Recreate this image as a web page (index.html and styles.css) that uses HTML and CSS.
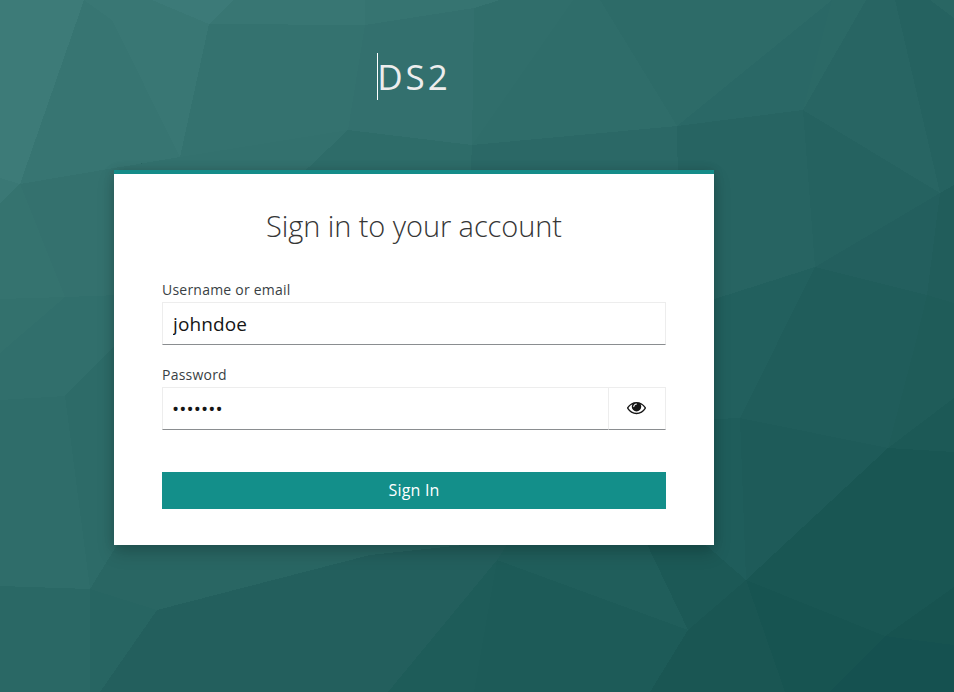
FILE: index.html
```
<!DOCTYPE html>
<html lang="en">
<head>
<meta charset="utf-8">
<title>Sign in to DS2</title>
<link rel="stylesheet" href="styles.css">
</head>
<body>
<svg class="backdrop" viewBox="0 0 954 692" preserveAspectRatio="none" aria-hidden="true">
  <rect width="954" height="692" fill="#296663"/>
  <polygon fill="#3d7b78" points="0,0 84,0 20,184 0,178"/>
  <polygon fill="#3a7875" points="0,178 20,184 0,203"/>
  <polygon fill="#377572" points="84,0 112,20 180,157 20,184"/>
  <polygon fill="#397774" points="84,0 152,0 209,24 180,157 112,20"/>
  <polygon fill="#3c7a78" points="152,0 233,0 209,24"/>
  <polygon fill="#387673" points="233,0 365,0 365,25 209,24"/>
  <polygon fill="#34726f" points="209,24 365,25 348,130 180,157"/>
  <polygon fill="#367471" points="365,0 500,0 474,8 365,25"/>
  <polygon fill="#33706e" points="365,25 474,8 472,145 348,130"/>
  <polygon fill="#306e6b" points="474,8 500,0 573,0 472,145"/>
  <polygon fill="#2f6d6a" points="573,0 600,0 677,126 472,145"/>
  <polygon fill="#2d6b68" points="600,0 832,0 677,126"/>
  <polygon fill="#2a6866" points="832,0 803,110 677,126"/>
  <polygon fill="#2b6966" points="832,0 866,0 803,110"/>
  <polygon fill="#286563" points="866,0 895,0 940,193 803,110"/>
  <polygon fill="#256260" points="895,0 954,0 954,185 940,193"/>
  <polygon fill="#296663" points="930,0 954,0 954,18"/>
  <polygon fill="#33716e" points="180,157 348,130 290,185 115,185 115,168"/>
  <polygon fill="#2e6c69" points="348,130 472,145 470,185 290,185"/>
  <polygon fill="#2b6866" points="472,145 677,126 680,185 470,185"/>
  <polygon fill="#276462" points="677,126 803,110 815,267 680,310"/>
  <polygon fill="#256260" points="803,110 940,193 815,267"/>
  <polygon fill="#235f5e" points="940,193 927,295 815,267"/>
  <polygon fill="#215d5b" points="940,193 954,185 954,303 927,295"/>
  <polygon fill="#22605e" points="680,310 815,267 740,418 690,420"/>
  <polygon fill="#205d5b" points="815,267 927,295 915,345 888,448 740,418"/>
  <polygon fill="#1f5c59" points="927,295 954,303 954,398 888,448 915,345"/>
  <polygon fill="#1c5956" points="888,448 954,398 954,452"/>
  <polygon fill="#1e5b59" points="740,418 888,448 746,580"/>
  <polygon fill="#1f5d5b" points="690,420 740,418 746,580 700,540"/>
  <polygon fill="#195653" points="888,448 954,452 954,587 885,636 746,580"/>
  <polygon fill="#175350" points="954,587 954,645 885,636"/>
  <polygon fill="#155150" points="885,636 954,645 954,692 830,692"/>
  <polygon fill="#175451" points="746,580 885,636 830,692 785,692"/>
  <polygon fill="#1a5653" points="746,580 785,692 650,692 688,630"/>
  <polygon fill="#1d5b58" points="497,560 688,630 650,692 474,692"/>
  <polygon fill="#205e5b" points="497,560 510,540 645,540 688,630"/>
  <polygon fill="#1c5956" points="645,540 700,540 746,580 688,630"/>
  <polygon fill="#235f5d" points="370,555 510,540 497,560 388,692 100,692 157,610"/>
  <polygon fill="#1e5c59" points="497,560 474,692 388,692"/>
  <polygon fill="#296663" points="157,610 370,555 370,540 120,540 90,589"/>
  <polygon fill="#276562" points="90,589 157,610 100,692 90,692"/>
  <polygon fill="#2a6865" points="0,586 90,589 90,692 0,692"/>
  <polygon fill="#2f6d6a" points="0,400 65,396 90,589 0,586"/>
  <polygon fill="#2d6b68" points="65,396 120,340 120,540 90,589"/>
  <polygon fill="#316f6c" points="0,353 65,297 120,292 120,340 65,396 0,400"/>
  <polygon fill="#35736f" points="0,203 20,184 65,297 0,299"/>
  <polygon fill="#34716e" points="20,184 120,167 120,295 65,297"/>
  <polygon fill="#33716d" points="0,299 65,297 0,353"/>
</svg>
<main class="login">
  <header class="brand"><span class="brand-name">DS2</span></header>
  <section class="card">
    <h1 class="title">Sign in to your account</h1>
    <form class="form">
      <label class="label" for="username">Username or email</label>
      <input class="input" id="username" type="text" value="johndoe">
      <label class="label" for="password">Password</label>
      <div class="group">
        <input class="input input-secret" id="password" type="password" value="secret1">
        <button class="reveal" type="button" aria-label="Show password">
          <svg class="eye" viewBox="0 384 1792 1152"><path d="M1664 960q-152-236-381-353 61 104 61 225 0 185-131.500 316.500t-316.500 131.500-316.500-131.500-131.500-316.500q0-121 61-225-229 117-381 353 133 205 333.500 326.500t434.500 121.500 434.500-121.500 333.500-326.500zm-720-384q0-20-14-34t-34-14q-125 0-214.500 89.500t-89.500 214.500q0 20 14 34t34 14 34-14 14-34q0-86 61-147t147-61q20 0 34-14t14-34zm848 384q0 34-20 69-140 230-376.500 368.500t-499.500 138.500-499.500-139-376.500-368q-20-35-20-69t20-69q140-229 376.500-368t499.500-139 499.500 139 376.500 368q20 35 20 69z"/></svg>
        </button>
      </div>
      <button class="submit" type="button">Sign In</button>
    </form>
  </section>
</main>
</body>
</html>
```
FILE: styles.css
```
* { box-sizing: border-box; }

body {
  margin: 0;
  height: 692px;
  overflow: hidden;
  background: #296663;
  font-family: "Open Sans", "Noto Sans", sans-serif;
  color: #151515;
}

.backdrop {
  position: absolute;
  inset: 0;
  z-index: -1;
  width: 100%;
  height: 100%;
}

.backdrop polygon { shape-rendering: crispEdges; }

.login {
  width: 600px;
  margin-left: 114px;
}

.brand {
  display: flex;
  justify-content: center;
  height: 170px;
  padding-top: 53px;
}

.brand-name {
  height: 47px;
  border-left: 1px solid #fff;
  font-size: 35px;
  line-height: 48px;
  letter-spacing: 3px;
  text-indent: -1px;
  color: #ededed;
}

.card {
  height: 375px;
  padding: 32px 48px 0;
  border-top: 4px solid #158c89;
  background: #fff;
  box-shadow: 0 8px 16px rgba(3, 3, 3, 0.17), 0 0 10px rgba(3, 3, 3, 0.12);
}

.title {
  margin: 0 0 34px;
  font-size: 29px;
  font-weight: 300;
  line-height: 40px;
  letter-spacing: -0.08px;
  text-align: center;
  color: #363636;
}

.form { display: flex; flex-direction: column; }

.label {
  height: 22px;
  font-size: 14px;
  line-height: 20px;
  letter-spacing: 0.22px;
  color: #393f44;
}

.input {
  width: 100%;
  height: 43px;
  margin: 0 0 20px;
  padding: 0 10px;
  border: 1px solid #ededed;
  border-bottom-color: #8a8d90;
  border-radius: 0;
  outline: 0;
  background: #fff;
  font: 19px/27px "Open Sans", "Noto Sans", sans-serif;
  letter-spacing: 0.1px;
  color: #151515;
}

.group { display: flex; margin-bottom: 42px; }

.input-secret {
  flex: 1;
  width: auto;
  margin: 0;
  padding-left: 9px;
  border-right: 0;
  letter-spacing: 0.1px;
}

.reveal {
  display: flex;
  align-items: center;
  justify-content: center;
  width: 58px;
  height: 43px;
  padding: 0 1px 0 0;
  border: 1px solid #ededed;
  border-bottom-color: #8a8d90;
  background: #fff;
}

.eye { width: 19px; height: 12.2px; fill: #151515; }

.submit {
  height: 37px;
  padding: 0 0 2px;
  border: 0;
  background: #138f8a;
  font: 500 16px/24px "Open Sans", "Noto Sans", sans-serif;
  letter-spacing: 0.2px;
  color: #fff;
}
```
